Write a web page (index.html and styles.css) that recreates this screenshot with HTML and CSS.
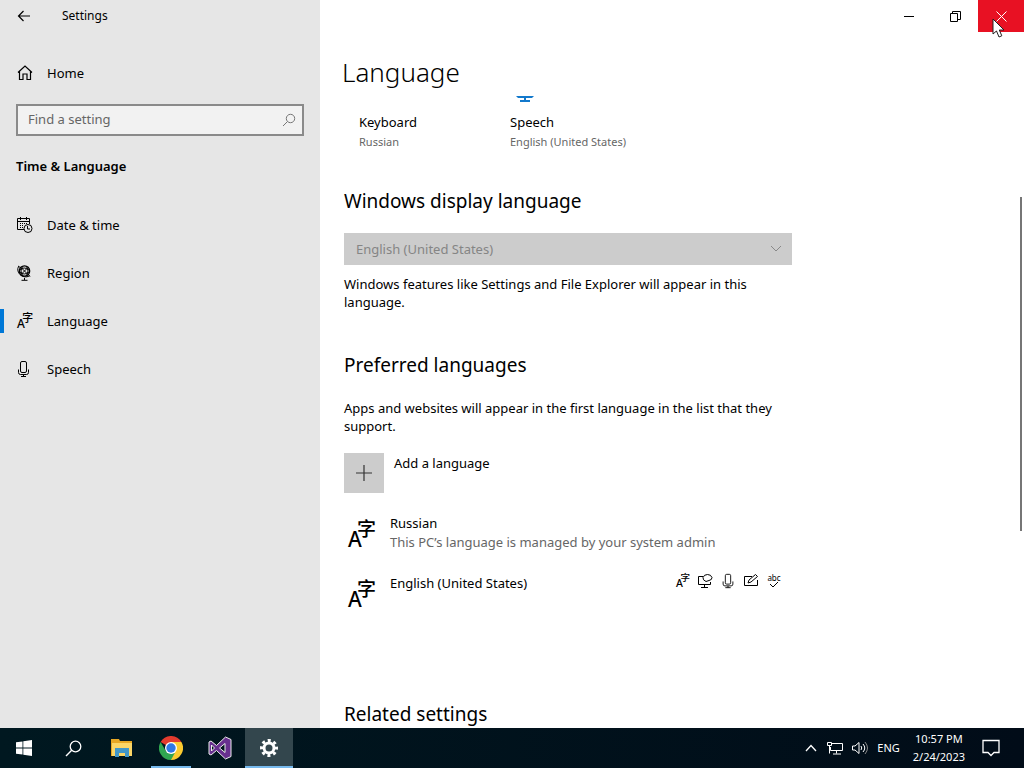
FILE: index.html
```html
<!DOCTYPE html>
<html lang="en">
<head>
<meta charset="utf-8">
<title>Settings</title>
<link rel="stylesheet" href="styles.css">
</head>
<body>
<div class="desktop">
  <div class="window">
    <aside class="sidebar">
      <header class="titlebar">
        <button class="back" aria-label="Back"><svg width="14" height="12" viewBox="0 0 14 12"><path d="M13 6H1.500M6.500 1L1.500 6l5 5" fill="none" stroke="#000" stroke-width="1.200"/></svg></button>
        <span class="app-name">Settings</span>
      </header>
      <a class="nav-item home" href="#home"><svg width="16" height="16" viewBox="0 0 16 16"><path d="M1 7.500L8 1l7 6.500M2.500 6.500v8h3.500V9h4v5.500h3.500v-8" fill="none" stroke="#000" stroke-width="1.200"/></svg>Home</a>
      <div class="search">
        <input class="search-input" type="text" placeholder="Find a setting" aria-label="Find a setting">
        <svg class="search-icon" width="14" height="14" viewBox="0 0 14 14"><circle cx="8.500" cy="5.500" r="4.200" fill="none" stroke="#777"/><path d="M5.500 8.500L1 13" stroke="#777"/></svg>
      </div>
      <h2 class="category">Time &amp; Language</h2>
      <nav class="nav">
        <a class="nav-item" href="#date"><svg width="16" height="16" viewBox="0 0 16 16" fill="none" stroke="#000"><path d="M7 12.500H.500v-11h12V7M.500 4.500h12M3.500 0v3M9.500 0v3"/><path d="M3 6.500h8M3 8.500h4M3 10.500h4" stroke-dasharray="1 1"/><circle cx="11" cy="11.500" r="4"/><path d="M10.500 9v3h2.500"/></svg>Date &amp; time</a>
        <a class="nav-item" href="#region"><svg width="16" height="16" viewBox="0 0 16 16" fill="none" stroke="#000"><circle cx="7.500" cy="6" r="5.200" stroke-width="1.300"/><path d="M4 2.500l7 7M11 2.500l-7 7M3 5q4-4 9 0M3 7q4 4 9 0M6 1q-4 5 0 10M9 1q4 5 0 10M1.500 1.500C-1.500 7 5 14.500 12.500 11M1 1l3 2M13 11.500l-2-2.500M7.500 13v2M4.500 15.300h6"/></svg>Region</a>
        <a class="nav-item active" href="#language" aria-current="page"><svg class="lang" width="16" height="16" viewBox="0 0 28 28" aria-hidden="true"><text class="glyph-a" x="0" y="27">A</text><text class="glyph-zi" x="9" y="16">字</text></svg>Language</a>
        <a class="nav-item" href="#speech"><svg width="16" height="18" viewBox="0 0 16 18" fill="none" stroke="#000"><rect x="3.500" y="1.500" width="6" height="11" rx="1.500"/><path d="M1.500 9.500v3q0 2 2 2h6q2 0 2-2v-3M6.500 14.500v2M4 16.500h5"/></svg>Speech</a>
      </nav>
    </aside>
    <main class="content">
      <div class="window-controls">
        <button class="control" aria-label="Minimize"><svg width="10" height="10"><path d="M0 5.500h10" stroke="#000"/></svg></button>
        <button class="control" aria-label="Restore"><svg width="11" height="11" fill="none" stroke="#000"><path d="M.500 2.500h7v8h-7zM2.500 2.500v-2h8v8h-3"/></svg></button>
        <button class="control close" aria-label="Close"><svg width="11" height="11"><path d="M.500.500l10 10M10.500.500l-10 10" stroke="#fff"/></svg></button>
      </div>
      <h1 class="title">Language</h1>
      <div class="scroller">
        <div class="tiles">
          <div class="tile"><span class="tile-icon"></span><span class="tile-name">Keyboard</span><span class="tile-value">Russian</span></div>
          <div class="tile"><span class="tile-icon"><svg width="18" height="7" viewBox="0 0 18 7"><path d="M0 0h18l-2 2H2zM8 2h2v3H8zM4 4h10v2H4z" fill="#1379cc"/></svg></span><span class="tile-name">Speech</span><span class="tile-value">English (United States)</span></div>
        </div>
        <h2 class="section display">Windows display language</h2>
        <div class="select-wrap">
          <select class="select" aria-label="Windows display language" disabled><option>English (United States)</option></select>
          <svg class="chevron" width="12" height="8"><path d="M1 1l5 5 5-5" fill="none" stroke="#888"/></svg>
        </div>
        <p class="text">Windows features like Settings and File Explorer will appear in this language.</p>
        <h2 class="section preferred">Preferred languages</h2>
        <p class="text">Apps and websites will appear in the first language in the list that they support.</p>
        <button class="add"><span class="add-box"><svg width="16" height="16"><path d="M8 0v16M0 8h16" stroke="#333" stroke-width="1.200"/></svg></span><span>Add a language</span></button>
        <ul class="languages">
          <li class="language"><svg class="lang lang-icon" width="28" height="28" viewBox="0 0 28 28" aria-hidden="true"><text class="glyph-a" x="0" y="27">A</text><text class="glyph-zi" x="9" y="16">字</text></svg><div class="lang-info"><span>Russian</span><span class="muted">This PC’s language is managed by your system admin</span></div></li>
          <li class="language"><svg class="lang lang-icon" width="28" height="28" viewBox="0 0 28 28" aria-hidden="true"><text class="glyph-a" x="0" y="27">A</text><text class="glyph-zi" x="9" y="16">字</text></svg><div class="lang-info"><span>English (United States)</span></div>
            <div class="features">
              <svg class="lang" width="14" height="14" viewBox="0 0 28 28" aria-hidden="true"><text class="glyph-a" x="0" y="27">A</text><text class="glyph-zi" x="9" y="16">字</text></svg>
              <svg width="16" height="16" viewBox="0 0 16 16" fill="none" stroke="#000"><path d="M6 3.500H1.500v8h12V9M7.500 12v2M4 14.500h7"/><path d="M9 8.500Q5.500 7 6 4.500 7 1.500 10.500 1.500t4.500 3Q15 7 12 7.500z"/></svg>
              <svg width="16" height="16" viewBox="0 0 16 18" fill="none" stroke="#000"><rect x="5" y="1.500" width="6" height="11" rx="1.500"/><path d="M2.500 9.500v3q0 2 2 2h7q2 0 2-2v-3M8 14.500v2M5 16.500h6"/></svg>
              <svg width="16" height="16" viewBox="0 0 16 16" fill="none" stroke="#000"><path d="M9 3.500H1.500v9h13V7M5 10l1-3 6.500-5.500 2 2L8 9z"/></svg>
              <svg class="spelling" width="16" height="16" viewBox="0 0 16 16"><text class="glyph-abc" x="8" y="8">abc</text><path d="M4 11l3 3 5-5" fill="none" stroke="#000"/></svg>
            </div>
          </li>
        </ul>
        <h2 class="section related">Related settings</h2>
      </div>
      <span class="scrollbar"></span>
    </main>
  </div>
  <footer class="taskbar">
    <button class="task" aria-label="Start"><svg width="16" height="16" viewBox="0 0 16 16"><path d="M0 2.300L6.500 1.400v6.200H0zM7.300 1.300L16 0v7.600H7.300zM0 8.400h6.500v6.200L0 13.700zM7.300 8.400H16V16l-8.700-1.200z" fill="#fff"/></svg></button>
    <button class="task" aria-label="Search"><svg width="17" height="17" viewBox="0 0 17 17"><circle cx="10.500" cy="6.500" r="5.300" fill="none" stroke="#fff" stroke-width="1.300"/><path d="M6.700 10.300L1 16" stroke="#fff" stroke-width="1.400"/></svg></button>
    <button class="task" aria-label="File Explorer"><svg width="22" height="18" viewBox="0 0 22 18"><path d="M0 0h8l1 2h12v15H0z" fill="#e8a824"/><path d="M1 4h20v13H1z" fill="#fbd667"/><path d="M4 9h14v9h-4v-4H8v4H4z" fill="#4297c8"/></svg></button>
    <button class="task running" aria-label="Chrome"><svg width="24" height="24" viewBox="0 0 24 24"><path d="M12 12L1.600 6A12 12 0 0 1 22.400 6z" fill="#e33b2e"/><path d="M12 12V6h10.400A12 12 0 0 1 12 24z" fill="#fccb30"/><path d="M1.600 6l5.200 9L12 18l4-1.500L12 24A12 12 0 0 1 1.600 6z" fill="#30a651"/><circle cx="12" cy="12" r="6" fill="#fff"/><circle cx="12" cy="12" r="4.700" fill="#3078e6"/></svg></button>
    <button class="task" aria-label="Visual Studio"><svg width="24" height="24" viewBox="0 0 24 24"><path d="M17.500 1L23 3.500v17L17.500 23 8.500 14.500 3 19l-2-1V6l2-1 5.500 4.500zM3.500 9v6l3-3zM17 7.500L11.500 12l5.500 4.500z" fill="#68308f" fill-rule="evenodd" stroke="#eee" stroke-width="1"/></svg></button>
    <button class="task current" aria-label="Settings"><svg width="18" height="18" viewBox="0 0 18 18"><circle cx="9" cy="9" r="5" fill="none" stroke="#fff" stroke-width="3"/><circle cx="9" cy="9" r="7.500" fill="none" stroke="#fff" stroke-width="3" stroke-dasharray="3 2.890" stroke-dashoffset="1.500"/></svg></button>
    <div class="tray">
      <svg width="12" height="8"><path d="M1 7l5-5.500L11 7" fill="none" stroke="#fff" stroke-width="1.300"/></svg>
      <svg width="17" height="14" viewBox="0 0 17 14" fill="none" stroke="#fff"><path d="M6 2.500h10.500v7h-12V6M10.500 9.500v3M7 13h8M1.500 1.500h4v3h-4zM3.500 4.500v8"/></svg>
      <svg width="16" height="14" viewBox="0 0 16 14" fill="none" stroke="#fff"><path d="M.500 5v4H3l4 3.500v-11L3 5zM9 5q1.500 2 0 4M11 3q3.500 4 0 8"/><path d="M13 1q5 6 0 12" stroke="#888"/></svg>
      <span class="lang-code">ENG</span>
      <div class="clock"><span>10:57 PM</span><span>2/24/2023</span></div>
      <svg width="18" height="18" viewBox="0 0 18 18"><path d="M1 1.500h16v12h-5l-3 3-3-3H1z" fill="none" stroke="#fff" stroke-width="1.300"/></svg>
    </div>
  </footer>
  <svg class="cursor" width="14" height="20" viewBox="0 0 14 20"><path d="M1 1v15l3.500-3 2.500 6 2.800-1.200L7.300 12H12z" fill="#fff" stroke="#222"/></svg>
</div>
</body>
</html>
```
FILE: styles.css
```css
* { box-sizing: border-box; }
body { margin: 0; font: 13px/18px "Noto Sans", "Noto Sans CJK SC", sans-serif; color: #000; }
button { border: 0; padding: 0; background: none; font: inherit; color: inherit; }
a { color: inherit; text-decoration: none; }
h1, h2, p, ul { margin: 0; padding: 0; font-weight: 400; }
svg { display: block; flex: none; }
.lang, .spelling { overflow: visible; }
.glyph-a { font: 500 21px "Noto Sans", sans-serif; }
.glyph-zi { font: 500 19px "Noto Sans CJK SC", sans-serif; }
.glyph-abc { font: 8px "Noto Sans", sans-serif; text-anchor: middle; }
.desktop { position: relative; display: flex; flex-direction: column; height: 100vh; overflow: hidden; }
.window { display: flex; flex: 1; min-height: 0; }
.sidebar { width: 320px; flex: none; background: #e6e6e6; }
.titlebar { display: flex; align-items: center; height: 32px; font-size: 12px; }
.back { display: flex; align-items: center; justify-content: center; width: 48px; height: 32px; }
.app-name { margin-left: 14px; line-height: 20px; }
.nav-item { display: flex; align-items: center; gap: 14px; height: 48px; padding-left: 17px; }
.home { margin-top: 17px; }
.search { position: relative; margin: 7px 16px 0; }
.search-input { width: 100%; height: 32px; padding: 0 30px 2px 10px; border: 2px solid #8a8a8a; border-radius: 0; background: #f2f2f2; font: inherit; display: block; }
.search-input::placeholder { color: #666; opacity: 1; }
.search-icon { position: absolute; right: 8px; top: 9px; }
.category { margin: 21px 16px 26px; font-size: 13px; font-weight: 600; }
.active { position: relative; }
.active::before { content: ""; position: absolute; left: 0; top: 12px; width: 4px; height: 24px; background: #0078d7; }
.content { position: relative; flex: 1; min-width: 0; display: flex; flex-direction: column; background: #fff; }
.window-controls { display: flex; justify-content: flex-end; }
.control { display: flex; align-items: center; justify-content: center; width: 46px; height: 32px; }
.close { background: #e81123; }
.title { margin: 20px 22px 4px; font-size: 26px; font-weight: 300; line-height: 40px; }
.scroller { flex: 1; min-height: 0; overflow: hidden; padding: 0 24px; }
.tiles { display: flex; padding-left: 15px; }
.tile { display: flex; flex-direction: column; width: 151px; white-space: nowrap; }
.tile-icon { height: 17px; padding-left: 6px; }
.tile-value { font-size: 11px; line-height: 22px; color: #666; }
.section { font-size: 19px; line-height: 28px; }
.display { margin: 34px 0 18px; }
.select-wrap { position: relative; max-width: 448px; margin-bottom: 10px; }
.select { appearance: none; display: block; width: 100%; height: 32px; padding: 0 12px; border: 0; border-radius: 0; background: #ccc; color: #858585; font: inherit; opacity: 1; }
.chevron { position: absolute; right: 10px; top: 12px; }
.text { max-width: 448px; }
.preferred { margin: 40px 0 20px; }
.add { display: flex; align-items: flex-start; gap: 10px; margin-top: 18px; line-height: 20px; }
.add-box { display: flex; align-items: center; justify-content: center; width: 40px; height: 40px; background: #ccc; }
.languages { max-width: 448px; list-style: none; margin-top: 20px; }
.language { display: flex; height: 60px; padding: 0 10px 0 4px; }
.lang-icon { margin: 7px 14px 0 0; }
.lang-info { display: flex; flex-direction: column; flex: 1; padding-top: 1px; line-height: 19px; }
.muted { color: #666; }
.features { display: flex; gap: 7px; }
.related { margin-top: 67px; }
.scrollbar { position: absolute; right: 2px; top: 27%; width: 2px; height: 46%; background: #767676; }
.taskbar { display: flex; gap: 1px; height: 40px; flex: none; background: linear-gradient(90deg, #001820, #010c18); color: #fff; font-size: 11px; }
.task { position: relative; display: flex; align-items: center; justify-content: center; width: 48px; }
.running::after, .current::after { content: ""; position: absolute; left: 4px; right: 4px; bottom: 0; height: 2px; background: #76b9ed; }
.current { background: #33464d; }
.current::after { left: 0; right: 0; }
.tray { display: flex; align-items: center; gap: 9px; margin-left: auto; padding-right: 24px; }
.clock { display: flex; flex-direction: column; align-items: center; padding: 0 8px 0 4px; }
.cursor { position: absolute; left: 992px; top: 18px; }
```
